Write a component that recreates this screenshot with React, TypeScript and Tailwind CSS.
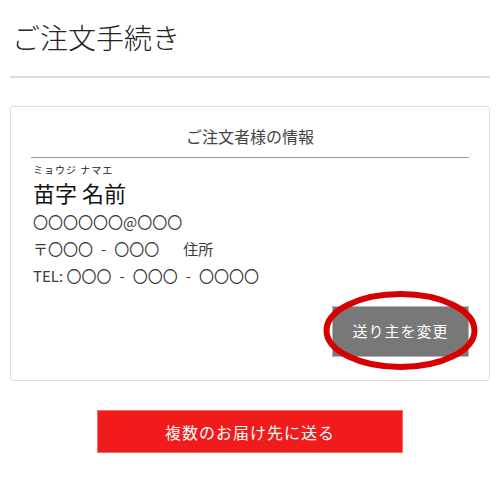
function Dash() {
  return <span className="mx-[8px]">-</span>;
}

export default function App() {
  const jp = "font-['Noto_Sans_CJK_JP','Noto_Sans',sans-serif]";
  return (
    <div className={`w-[500px] h-[487px] bg-white px-[10px] text-[#333] ${jp}`}>
      <div className="h-[76px] pl-[2px] pt-[17px]">
        <h1 className="text-[28px] leading-[40px] font-light text-[#222]">ご注文手続き</h1>
      </div>
      <div className="h-[2px] bg-[#dcdcdc]" />

      <section className="relative mt-[28px] h-[275px] rounded-[3px] border border-[#dddddd] px-[20px]">
        <h2 className="pt-[17px] pb-[9px] text-center text-[16px] leading-[24px] text-[#444]">
          ご注文者様の情報
        </h2>
        <div className="h-[1px] bg-[#999]" />

        <div className="pl-[2px] pt-[7px]">
          <div className="text-[10px] leading-[10px] text-[#222] tracking-[1px]">ミョウジ ナマエ</div>
          <div className="mt-[6px] text-[22px] leading-[22px] text-[#111]">苗字 名前</div>
          <div className="mt-[5px] text-[15px] leading-[27px] text-[#3a3a3a]">
            <div>〇〇〇〇〇〇@〇〇〇</div>
            <div>
              〒〇〇〇<Dash />〇〇〇<span className="ml-[24px]">住所</span>
            </div>
            <div>
              TEL: 〇〇〇<Dash />〇〇〇<Dash />〇〇〇〇
            </div>
          </div>
        </div>

        <div className="mt-[17px] flex justify-end">
          <div className="relative">
            <button className="h-[51px] w-[137px] border border-[#b5b5b5] bg-[#787878] text-[15px] text-white tracking-[1px]">
              送り主を変更
            </button>
            <svg
              className="pointer-events-none absolute left-[-10px] top-[-16px]"
              width="157"
              height="81"
              viewBox="0 0 157 81"
            >
              <ellipse cx="78.5" cy="40.5" rx="74" ry="36.5" fill="none" stroke="#d60000" strokeWidth="6" />
            </svg>
          </div>
        </div>
      </section>

      <div className="mt-[29px] flex justify-center">
        <button className="h-[43px] w-[306px] border border-[#f26a6a] bg-[#f21b1b] text-[16px] text-white tracking-[1px]">
          複数のお届け先に送る
        </button>
      </div>
    </div>
  );
}
